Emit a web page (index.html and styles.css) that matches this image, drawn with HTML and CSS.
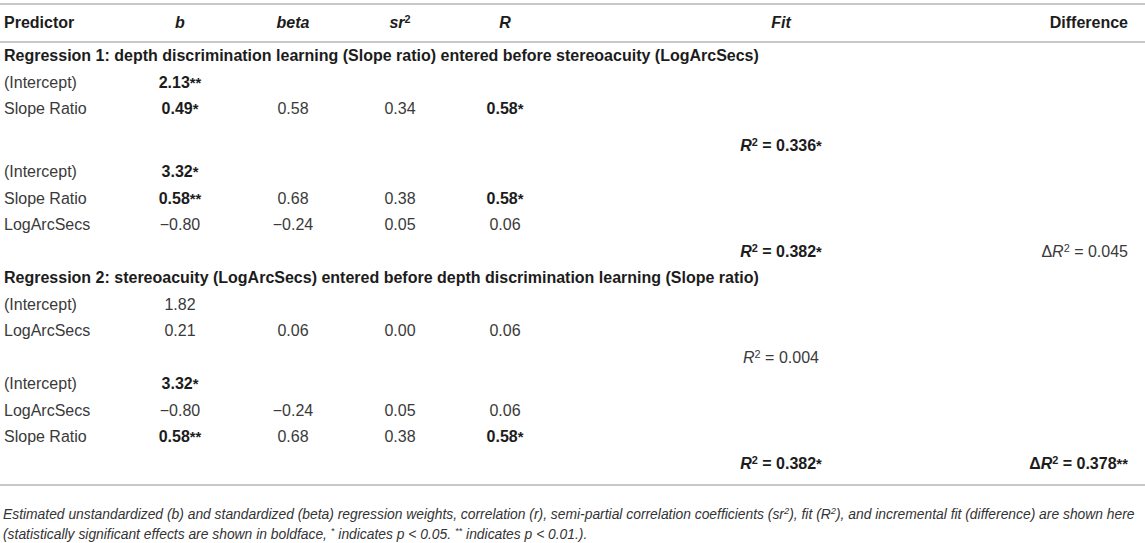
FILE: index.html
```html
<!DOCTYPE html>
<html lang="en">
<head>
    <meta charset="UTF-8">
    <meta name="viewport" content="width=device-width, initial-scale=1.0">
    <title>Regression table</title>
    <link rel="stylesheet" href="styles.css">
</head>
<body>
    <div class="tabla">
        <table class="regresion">
            <colgroup>
                <col class="col-pred">
                <col class="col-b">
                <col class="col-beta">
                <col class="col-sr">
                <col class="col-r">
                <col class="col-fit">
                <col class="col-diff">
            </colgroup>
            <thead>
                <tr>
                    <th class="izq">Predictor</th>
                    <th><i>b</i></th>
                    <th><i>beta</i></th>
                    <th><i>sr</i><sup>2</sup></th>
                    <th><i>R</i></th>
                    <th><i>Fit</i></th>
                    <th class="der">Difference</th>
                </tr>
            </thead>
            <tbody>
                <tr>
                    <td class="seccion" colspan="7">Regression 1: depth discrimination learning (Slope ratio) entered before stereoacuity (LogArcSecs)</td>
                </tr>
                <tr>
                    <td class="izq">(Intercept)</td>
                    <td><b>2.13<span class="ast">**</span></b></td>
                    <td></td><td></td><td></td><td></td><td></td>
                </tr>
                <tr>
                    <td class="izq">Slope Ratio</td>
                    <td><b>0.49<span class="ast">*</span></b></td>
                    <td>0.58</td>
                    <td>0.34</td>
                    <td><b>0.58<span class="ast">*</span></b></td>
                    <td></td><td></td>
                </tr>
                <tr class="ajuste">
                    <td></td><td></td><td></td><td></td><td></td>
                    <td><b><i>R</i><sup>2</sup> = 0.336<span class="ast">*</span></b></td>
                    <td></td>
                </tr>
                <tr>
                    <td class="izq">(Intercept)</td>
                    <td><b>3.32<span class="ast">*</span></b></td>
                    <td></td><td></td><td></td><td></td><td></td>
                </tr>
                <tr>
                    <td class="izq">Slope Ratio</td>
                    <td><b>0.58<span class="ast">**</span></b></td>
                    <td>0.68</td>
                    <td>0.38</td>
                    <td><b>0.58<span class="ast">*</span></b></td>
                    <td></td><td></td>
                </tr>
                <tr>
                    <td class="izq">LogArcSecs</td>
                    <td>&minus;0.80</td>
                    <td>&minus;0.24</td>
                    <td>0.05</td>
                    <td>0.06</td>
                    <td></td><td></td>
                </tr>
                <tr>
                    <td></td><td></td><td></td><td></td><td></td>
                    <td><b><i>R</i><sup>2</sup> = 0.382<span class="ast">*</span></b></td>
                    <td class="der">&Delta;<i>R</i><sup>2</sup> = 0.045</td>
                </tr>
                <tr>
                    <td class="seccion" colspan="7">Regression 2: stereoacuity (LogArcSecs) entered before depth discrimination learning (Slope ratio)</td>
                </tr>
                <tr>
                    <td class="izq">(Intercept)</td>
                    <td>1.82</td>
                    <td></td><td></td><td></td><td></td><td></td>
                </tr>
                <tr>
                    <td class="izq">LogArcSecs</td>
                    <td>0.21</td>
                    <td>0.06</td>
                    <td>0.00</td>
                    <td>0.06</td>
                    <td></td><td></td>
                </tr>
                <tr>
                    <td></td><td></td><td></td><td></td><td></td>
                    <td><i>R</i><sup>2</sup> = 0.004</td>
                    <td></td>
                </tr>
                <tr>
                    <td class="izq">(Intercept)</td>
                    <td><b>3.32<span class="ast">*</span></b></td>
                    <td></td><td></td><td></td><td></td><td></td>
                </tr>
                <tr>
                    <td class="izq">LogArcSecs</td>
                    <td>&minus;0.80</td>
                    <td>&minus;0.24</td>
                    <td>0.05</td>
                    <td>0.06</td>
                    <td></td><td></td>
                </tr>
                <tr>
                    <td class="izq">Slope Ratio</td>
                    <td><b>0.58<span class="ast">**</span></b></td>
                    <td>0.68</td>
                    <td>0.38</td>
                    <td><b>0.58<span class="ast">*</span></b></td>
                    <td></td><td></td>
                </tr>
                <tr class="ultima">
                    <td></td><td></td><td></td><td></td><td></td>
                    <td><b><i>R</i><sup>2</sup> = 0.382<span class="ast">*</span></b></td>
                    <td class="der"><b>&Delta;<i>R</i><sup>2</sup> = 0.378<span class="ast">**</span></b></td>
                </tr>
            </tbody>
        </table>

        <p class="nota">Estimated unstandardized (b) and standardized (beta) regression weights, correlation (r), semi-partial correlation coefficients (sr<sup>2</sup>), fit (R<sup>2</sup>), and incremental fit (difference) are shown here (statistically significant effects are shown in boldface, <sup>*</sup> indicates p &lt; 0.05. <sup>**</sup> indicates p &lt; 0.01.).</p>
    </div>
</body>
</html>
```

FILE: styles.css
```css
body {
    margin: 0;
    background-color: white;
    font-family: "Liberation Sans", Arial, sans-serif;
    color: #3a3a3a;
}
.tabla {
    padding-top: 3px;
}
.regresion {
    width: 100%;
    border-collapse: collapse;
    table-layout: fixed;
    font-size: 16px;
}
.col-pred { width: 125px; }
.col-b { width: 110px; }
.col-beta { width: 116px; }
.col-sr { width: 98px; }
.col-r { width: 112px; }
.col-fit { width: 440px; }

.regresion th {
    height: 36px;
    padding: 0;
    font-weight: bold;
    color: #1c1c1c;
    text-align: center;
    border-top: 2px solid #c8c8c8;
    border-bottom: 2px solid #c8c8c8;
}
.regresion td {
    height: 26.5px;
    padding: 0;
    text-align: center;
    white-space: nowrap;
}
.regresion b {
    color: #1c1c1c;
}
.regresion .izq {
    text-align: left;
    padding-left: 4px;
}
.regresion .der {
    text-align: right;
    padding-right: 17px;
}
.regresion .seccion {
    text-align: left;
    padding-left: 4px;
    font-weight: bold;
    color: #1c1c1c;
}
.regresion tr.ajuste td {
    padding-top: 10px;
}
.regresion tr.ultima td {
    padding-bottom: 7px;
    border-bottom: 2px solid #c8c8c8;
}
sup {
    font-size: 0.68em;
    line-height: 0;
    vertical-align: 0.5em;
}
.ast {
    font-size: 0.92em;
}
.nota {
    margin: 18px 0 0;
    padding: 0 0 0 3px;
    font-size: 13.85px;
    line-height: 20px;
    font-style: italic;
    color: #333;
}
```
